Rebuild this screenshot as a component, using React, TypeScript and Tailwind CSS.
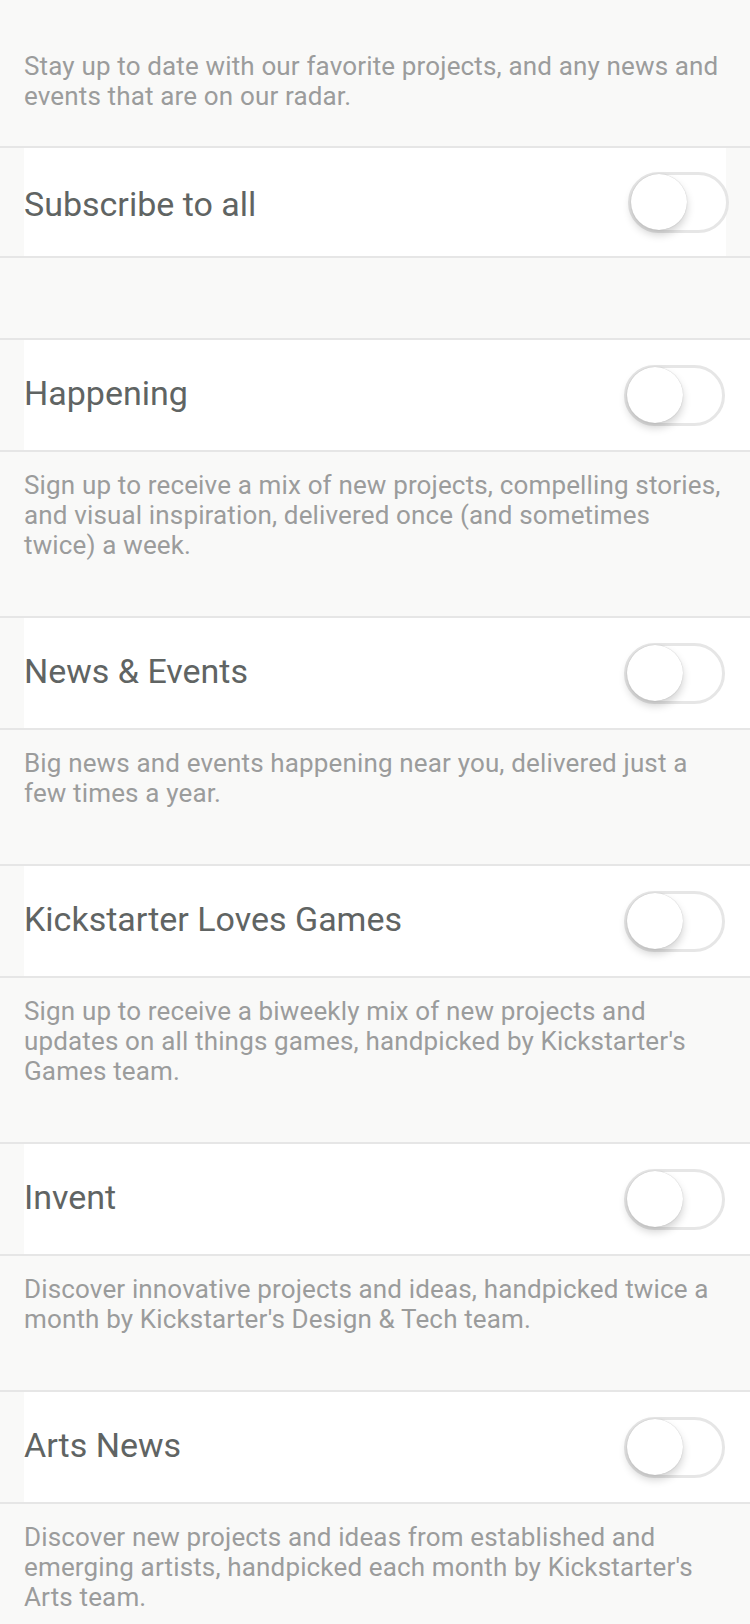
import { useState } from 'react';

type Newsletter = {
  id: string;
  title: string;
  description: string;
};

const newsletters: Newsletter[] = [
  {
    id: 'happening',
    title: 'Happening',
    description:
      'Sign up to receive a mix of new projects, compelling stories, and visual inspiration, delivered once (and sometimes twice) a week.',
  },
  {
    id: 'news',
    title: 'News & Events',
    description: 'Big news and events happening near you, delivered just a few times a year.',
  },
  {
    id: 'games',
    title: 'Kickstarter Loves Games',
    description:
      "Sign up to receive a biweekly mix of new projects and updates on all things games, handpicked by Kickstarter's Games team.",
  },
  {
    id: 'invent',
    title: 'Invent',
    description: "Discover innovative projects and ideas, handpicked twice a month by Kickstarter's Design & Tech team.",
  },
  {
    id: 'arts',
    title: 'Arts News',
    description:
      "Discover new projects and ideas from established and emerging artists, handpicked each month by Kickstarter's Arts team.",
  },
];

function Toggle({ on, onChange }: { on: boolean; onChange: () => void }) {
  return (
    <button
      onClick={onChange}
      className={`flex items-center w-[101px] h-[61px] rounded-full border-[3px] ${
        on ? 'bg-[#2bde73] border-[#2bde73] justify-end' : 'bg-white border-[#e6e6e6] justify-start'
      }`}
    >
      <span className="block w-[56px] h-[56px] rounded-full bg-white shadow-[0_5px_8px_rgba(0,0,0,0.18),0_0_1px_rgba(0,0,0,0.25)]" />
    </button>
  );
}

export default function App() {
  const [all, setAll] = useState(false);
  const [subs, setSubs] = useState<Record<string, boolean>>({});

  const toggle = (id: string) => setSubs({ ...subs, [id]: !subs[id] });

  return (
    <div className="min-h-screen bg-[#f9f9f8] font-['Roboto',sans-serif]">
      <p className="pl-[24px] pr-[26px] pt-[51px] pb-[35px] text-[26px] leading-[30px] tracking-[0.15px] text-[#9b9c9c]">
        Stay up to date with our favorite projects, and any news and events that are on our radar.
      </p>

      <div className="border-y-2 border-[#e6e6e6] h-[112px]">
        <div className="mx-[24px] h-full bg-white flex items-center justify-between">
          <span className="text-[34px] pt-[4px] text-[#606463]">Subscribe to all</span>
          <div className="-mr-[3px]">
            <Toggle on={all} onChange={() => setAll(!all)} />
          </div>
        </div>
      </div>

      <div className="h-[80px]" />

      {newsletters.map((n, i) => (
        <div key={n.id}>
          <div className={`${i === 0 ? 'border-t-2 h-[114px]' : 'h-[112px]'} border-b-2 border-[#e6e6e6]`}>
            <div className="ml-[24px] h-full bg-white flex items-center justify-between pr-[25px]">
              <span className="text-[34px] pb-[4px] text-[#606463]">{n.title}</span>
              <Toggle on={!!subs[n.id]} onChange={() => toggle(n.id)} />
            </div>
          </div>
          <p className="pl-[24px] pr-[26px] pt-[18px] pb-[56px] text-[26px] leading-[30px] tracking-[0.15px] text-[#9b9c9c] border-b-2 border-[#e6e6e6]">
            {n.description}
          </p>
        </div>
      ))}
    </div>
  );
}
